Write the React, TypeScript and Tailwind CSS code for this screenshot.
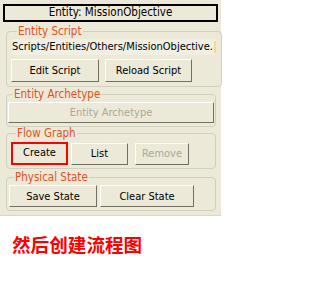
import type { ReactNode } from 'react';

const FONT = "font-['DejaVu_Sans_Condensed','Liberation_Sans',sans-serif]";

function XpButton({ children, disabled, className = '' }: { children: ReactNode; disabled?: boolean; className?: string }) {
  return (
    <button
      className={`flex items-center justify-center bg-[#ECE9D8] border border-t-white border-l-white border-b-[#716F64] border-r-[#716F64] text-[11px] leading-none ${
        disabled ? 'text-[#ACA899]' : 'text-black'
      } ${className}`}
    >
      {children}
    </button>
  );
}

function Group({ title, children, className = '' }: { title: string; children: ReactNode; className?: string }) {
  return (
    <fieldset className={`mx-[6px] w-[210px] border border-[#D0D0BF] rounded-[4px] ${className}`}>
      <legend className="ml-[5px] px-[1px] text-[11.5px] leading-[13px] text-[#E4501E]">{title}</legend>
      {children}
    </fieldset>
  );
}

export default function App() {
  return (
    <div className={`w-[221px] h-[282px] bg-white ${FONT}`}>
      <div className="h-[216px] bg-[#ECE9D8] pt-[4px] border-b border-[#DAD7C5]">
        {/* Title */}
        <div className="mx-[3px] h-[18px] border-2 border-black flex items-center justify-center text-[11.5px] text-black">
          Entity: MissionObjective
        </div>

        {/* Entity Script */}
        <Group title="Entity Script" className="mt-[3px] px-[5px] pt-[1px] pb-[4px]">
          <div className="h-[16px] bg-[#F1EFE2] flex items-center overflow-hidden whitespace-nowrap text-[11px] text-black">
            Scripts/Entities/Others/MissionObjective.
            <span className="ml-[1px] w-[2px] h-[12px] bg-[#F5D98A]" />
          </div>
          <div className="mt-[4px] flex gap-[6px] -ml-[1px]">
            <XpButton className="w-[88px] h-[23px]">Edit Script</XpButton>
            <XpButton className="w-[87px] h-[23px]">Reload Script</XpButton>
          </div>
        </Group>

        {/* Entity Archetype */}
        <Group title="Entity Archetype" className="mt-[1px] px-[1px] pt-[1px] pb-[3px]">
          <XpButton disabled className="w-full h-[21px]">Entity Archetype</XpButton>
        </Group>

        {/* Flow Graph */}
        <Group title="Flow Graph" className="px-[4px] pt-[2px] pb-[3px]">
          <div className="flex items-center">
            <button className="w-[57px] h-[23px] border-2 border-[#FF0000] bg-[#ECE9D8] text-[11px] text-black flex items-center justify-center">
              Create
            </button>
            <XpButton className="ml-[3px] w-[57px] h-[22px]">List</XpButton>
            <XpButton disabled className="ml-[7px] w-[54px] h-[22px]">Remove</XpButton>
          </div>
        </Group>

        {/* Physical State */}
        <Group title="Physical State" className="mt-[2px] px-[2px] pt-[1px] pb-[3px]">
          <div className="flex gap-[3px]">
            <XpButton className="w-[88px] h-[22px]">Save State</XpButton>
            <XpButton className="w-[94px] h-[22px]">Clear State</XpButton>
          </div>
        </Group>
      </div>

      <div className="mt-[17px] ml-[12px] text-[18.6px] leading-[22px] font-bold text-[#FF0000] font-['Noto_Sans_CJK_SC',sans-serif]">
        然后创建流程图
      </div>
    </div>
  );
}
